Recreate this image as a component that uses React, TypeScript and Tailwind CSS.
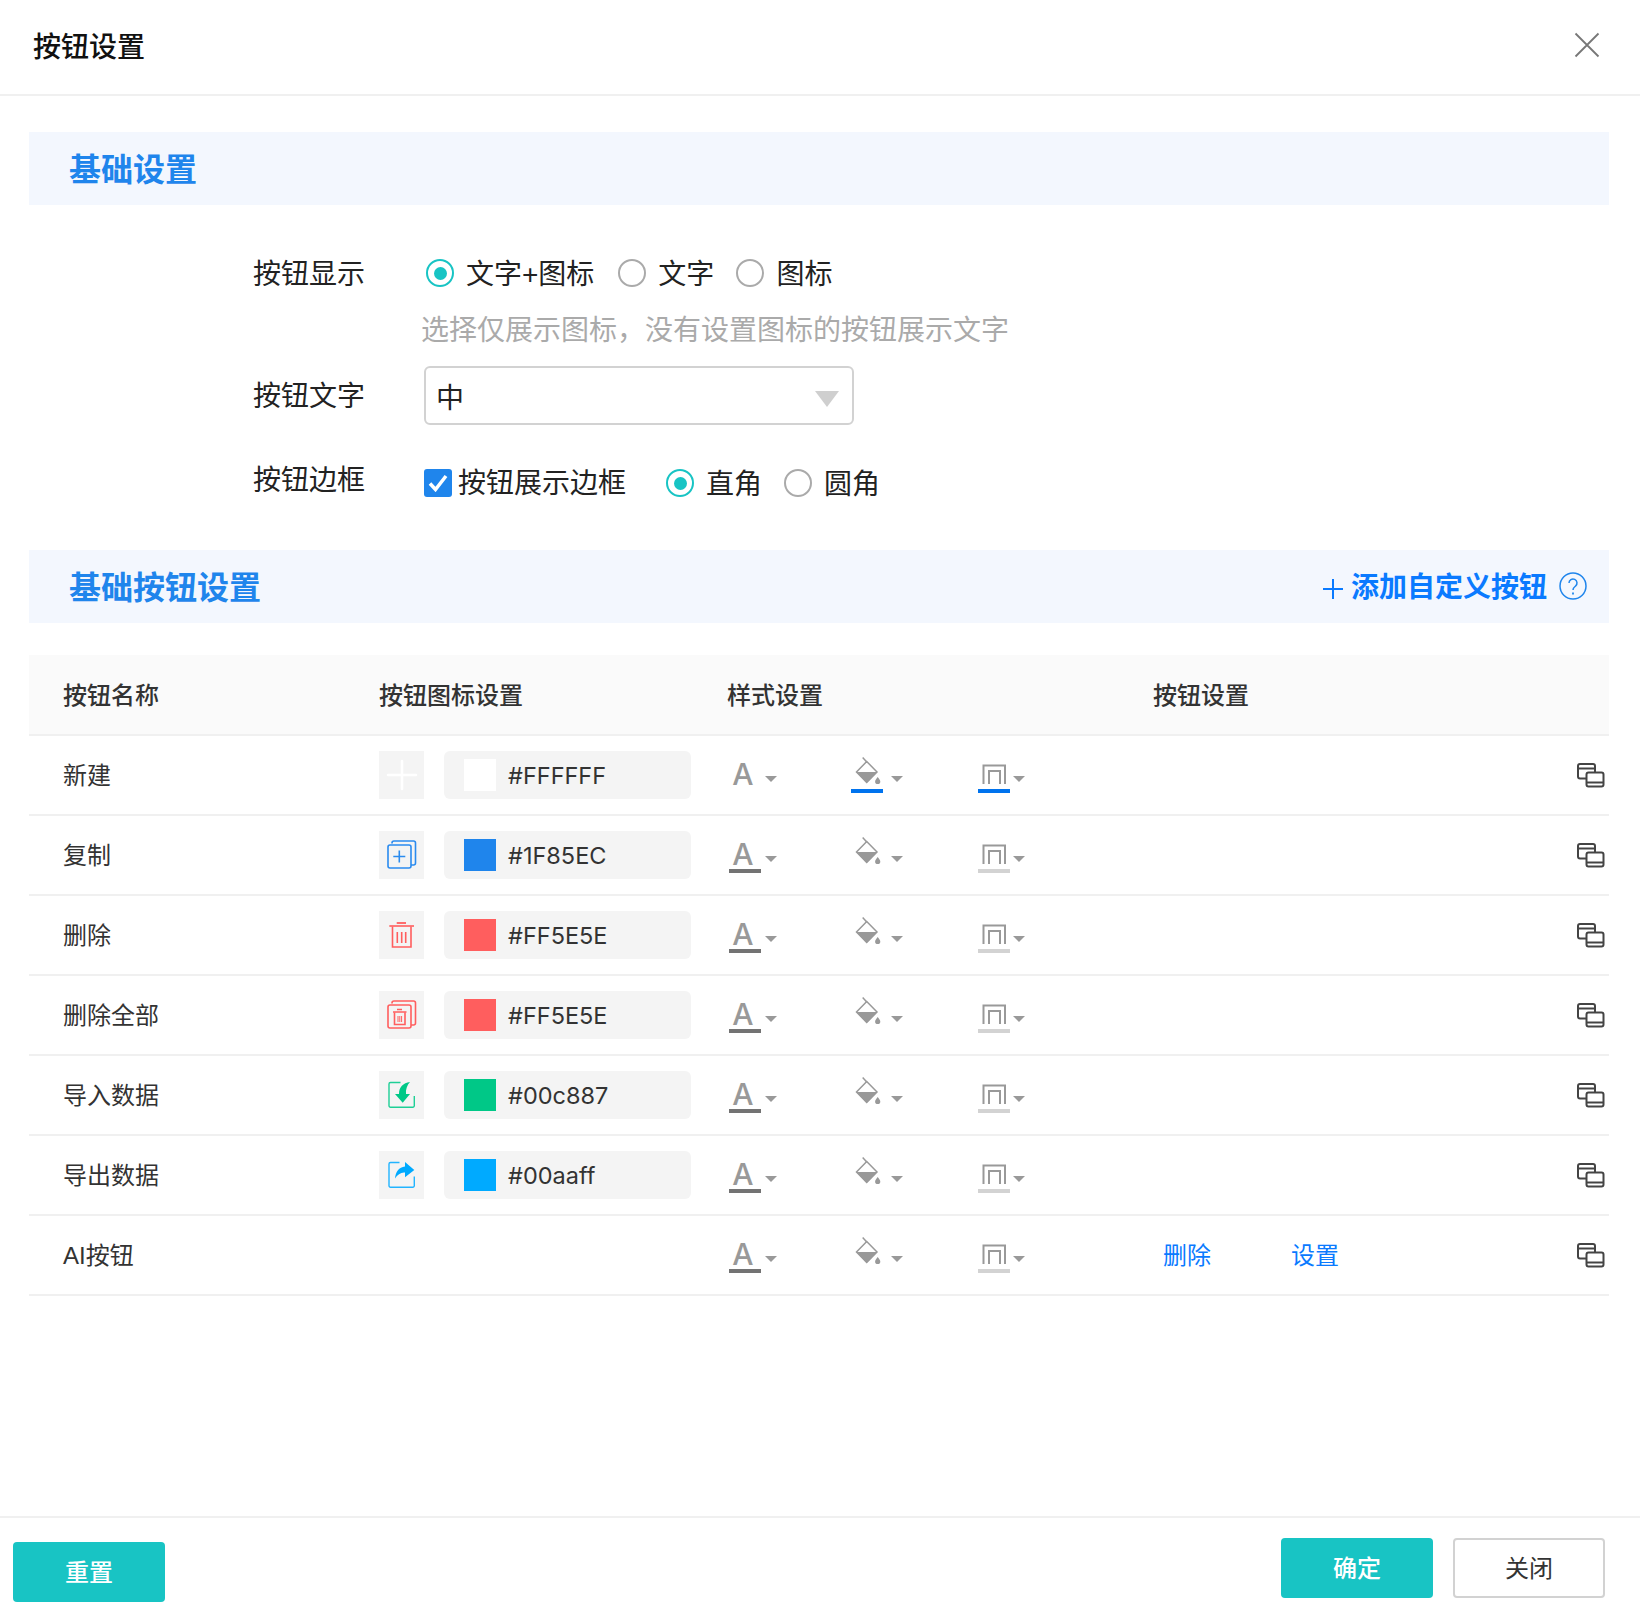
type RowData = {
  name: string;
  icon?: string;
  color?: string;
  swatch?: string;
};

const rows: RowData[] = [
  { name: "新建", icon: "plus", color: "#FFFFFF", swatch: "bg-[#ffffff]" },
  { name: "复制", icon: "copy", color: "#1F85EC", swatch: "bg-[#1f85ec]" },
  { name: "删除", icon: "trash", color: "#FF5E5E", swatch: "bg-[#ff5e5e]" },
  { name: "删除全部", icon: "trashAll", color: "#FF5E5E", swatch: "bg-[#ff5e5e]" },
  { name: "导入数据", icon: "import", color: "#00c887", swatch: "bg-[#00c887]" },
  { name: "导出数据", icon: "export", color: "#00aaff", swatch: "bg-[#00aaff]" },
  { name: "AI按钮" },
];

function ButtonIcon({ name }: { name?: string }) {
  if (name === "plus") {
    return (
      <svg width="45" height="48" fill="none" stroke="#fff" strokeWidth="2.5" strokeLinecap="round">
        <path d="M9 24H37M23 10V38" />
      </svg>
    );
  }
  if (name === "copy") {
    return (
      <svg width="45" height="48" fill="none" stroke="#2a8bef" strokeWidth="1.6">
        <path d="M13 12.5V12a2 2 0 0 1 2-2H34.500a2 2 0 0 1 2 2V32a2 2 0 0 1-2 2H32" />
        <rect x="9" y="14" width="23" height="23" rx="2" />
        <path d="M20.300 19.500V31.500M14.300 25.500H26.300" />
      </svg>
    );
  }
  if (name === "trash") {
    return (
      <svg width="45" height="48" fill="none" stroke="#ff5e5e" strokeWidth="1.6">
        <path d="M17.700 12H27" strokeWidth="1.800" />
        <path d="M10.300 15H35" />
        <path d="M13.500 15.500V36H32V15.500" />
        <path d="M18.300 21V32M22.700 21V32M26.700 21V32" />
      </svg>
    );
  }
  if (name === "trashAll") {
    return (
      <svg width="45" height="48" fill="none" stroke="#ff5e5e" strokeWidth="1.6">
        <path d="M13 12.500V12a2 2 0 0 1 2-2H34.500a2 2 0 0 1 2 2V32a2 2 0 0 1-2 2H32" />
        <rect x="9" y="14" width="23" height="23" rx="2" />
        <path d="M18 18.500H23M14 21H27.500" />
        <path d="M15.500 21.500V33.500H26V21.500" />
        <path d="M19 25V31M20.800 25V31M22.600 25V31" strokeWidth="1" />
      </svg>
    );
  }
  if (name === "import") {
    return (
      <svg width="45" height="48" fill="none">
        <path d="M21.500 11.500H11.500a1.500 1.500 0 0 0-1.500 1.500V34.800a1.500 1.500 0 0 0 1.500 1.500H33.800a1.500 1.500 0 0 0 1.500-1.500V25" stroke="#1fcf96" strokeWidth="1.400" />
        <path d="M31 11C24 12 20 16 20 23H16L23.700 31.700L31 23H27C26.500 19 28 14 31 11Z" fill="#00c887" />
      </svg>
    );
  }
  if (name === "export") {
    return (
      <svg width="45" height="48" fill="none">
        <path d="M20.500 11.500H11.500a1.500 1.500 0 0 0-1.500 1.500V34.800a1.500 1.500 0 0 0 1.500 1.500H33.800a1.500 1.500 0 0 0 1.500-1.500V25.500" stroke="#22b4ff" strokeWidth="1.400" />
        <path d="M26 11L35.300 19L26 26.300V21.500C22 21 18.500 23.500 16 27.500C16.500 21 20 16 26 15.500Z" fill="#00aaff" />
      </svg>
    );
  }
  return null;
}

function Caret({ className }: { className: string }) {
  return (
    <svg width="12" height="6" className={className} fill="#999">
      <path d="M0 0H12L6 6Z" />
    </svg>
  );
}

function StyleButtons({ first }: { first: boolean }) {
  return (
    <div className="flex items-start pl-[2px] h-full">
      {/* TEXT COLOR */}
      <div className="flex items-start w-[122px]">
        <div className="w-8 pt-[21px]">
          <div className="h-7 pr-1 flex items-end justify-center font-['Inter',sans-serif] font-medium text-[30px] leading-[22px] text-[#999]">
            A
          </div>
          <div className={first ? "h-1 mt-1" : "h-1 mt-1 bg-[#737373]"} />
        </div>
        <Caret className="ml-1 mt-10" />
      </div>

      {/* FILL */}
      <div className="flex items-start w-[127px]">
        <div className="w-8 pt-[21px]">
          <svg width="32" height="28" fill="none" className="block">
            <path d="M11.700 .5L15.700 5" stroke="#999" strokeWidth="1.500" />
            <path d="M15.700 4.500L26 15L15.700 25.500L5.500 15Z" stroke="#999" strokeWidth="1.500" />
            <path d="M5.500 15H26L15.700 26Z" fill="#999" />
            <path d="M26.700 20C28 22 29.300 23 29.300 24.500A2.600 2.600 0 0 1 24.100 24.500C24.100 23 25.400 22 26.700 20Z" fill="#999" />
          </svg>
          <div className={first ? "h-1 mt-1 bg-[#0073ee]" : "h-1 mt-1"} />
        </div>
        <Caret className="ml-2 mt-10" />
      </div>

      {/* BORDER */}
      <div className="flex items-start">
        <div className="w-8 pt-[21px]">
          <svg width="32" height="28" fill="none" stroke="#999" strokeWidth="2" className="block">
            <path d="M5.500 27V8.500H27V27" />
            <path d="M11 27V14H22V27" />
          </svg>
          <div className={first ? "h-1 mt-1 bg-[#0073ee]" : "h-1 mt-1 bg-[#d3d3d3]"} />
        </div>
        <Caret className="ml-[3px] mt-10" />
      </div>
    </div>
  );
}

function CopyIcon() {
  return (
    <svg width="28" height="25" fill="none" stroke="#444" strokeWidth="2">
      <path d="M9 15.500H3a2 2 0 0 1-2-2V3a2 2 0 0 1 2-2H16a2 2 0 0 1 2 2V9.500" />
      <path d="M1 5.500H18" />
      <rect x="9.500" y="9.500" width="17" height="14" rx="2" />
      <path d="M9.500 19.500H26.500" />
    </svg>
  );
}

function Radio({ checked, label }: { checked?: boolean; label: string }) {
  return (
    <div className="flex items-center gap-3">
      <div
        className={
          checked
            ? "w-7 h-7 rounded-full border-2 border-[#18c4c4] flex items-center justify-center"
            : "w-7 h-7 rounded-full border-2 border-[#aaaaaa]"
        }
      >
        {checked && <div className="w-[13px] h-[13px] rounded-full bg-[#18c4c4]" />}
      </div>
      <span className="leading-7 translate-y-0.5">{label}</span>
    </div>
  );
}

function SectionBar({ title, children }: { title: string; children?: React.ReactNode }) {
  return (
    <div className="ml-[29px] mr-[31px] h-[73px] pl-10 pr-[22px] bg-[#f3f7fe] flex items-center justify-between">
      <h2 className="text-[32px] font-semibold text-[#1f85ec] translate-y-px">{title}</h2>
      {children}
    </div>
  );
}

export default function App() {
  return (
    <div className="w-[1640px] h-[1620px] bg-white flex flex-col font-['Liberation_Sans','Noto_Sans_CJK_SC',sans-serif] text-[#222]">

      {/* HEADER */}
      <div className="h-24 shrink-0 pl-[33px] pr-10 border-b-2 border-[#f0f0f0] flex items-center justify-between">
        <h1 className="text-[28px] font-medium text-[#111] translate-y-px">按钮设置</h1>
        <svg width="26" height="26" fill="none" stroke="#777" strokeWidth="1.800" className="-mt-1">
          <path d="M1.500 1.500L24.500 24.500M24.500 1.500L1.500 24.500" />
        </svg>
      </div>

      <div className="mt-9">
        <SectionBar title="基础设置" />
      </div>

      {/* BASIC FORM */}
      <div className="pl-[253px] text-[28px]">
        <div className="flex items-center mt-[54px] h-7">
          <div className="w-[173px] leading-7 translate-y-0.5">按钮显示</div>
          <div className="flex items-center gap-[22px]">
            <div className="mr-0.5">
              <Radio checked label="文字+图标" />
            </div>
            <Radio label="文字" />
            <Radio label="图标" />
          </div>
        </div>

        <div className="pl-[168px] mt-7 leading-7 text-[#aaaaaa] translate-y-0.5">
          选择仅展示图标，没有设置图标的按钮展示文字
        </div>

        <div className="flex items-center mt-[23px]">
          <div className="w-[171px] leading-7 translate-y-px">按钮文字</div>
          <div className="w-[430px] h-[59px] pl-2.5 pr-[13px] rounded-md border-2 border-[#d2d2d2] flex items-center justify-between">
            <span className="leading-7 translate-y-[3px]">中</span>
            <svg width="24" height="16" fill="#cfcfcf" className="mt-[7px]">
              <path d="M0 0H24L12 16Z" />
            </svg>
          </div>
        </div>

        <div className="flex items-start mt-11 h-7">
          <div className="w-[171px] leading-7 -mt-0.5">按钮边框</div>
          <div className="flex items-center">
            <div className="w-7 h-7 rounded-[3px] bg-[#1f85ec] flex items-center justify-center">
              <svg width="20" height="18" fill="none" stroke="#fff" strokeWidth="3.500">
                <path d="M2 9.500L7.500 15.500L18 2" />
              </svg>
            </div>
            <span className="ml-1.5 leading-7 translate-y-px">按钮展示边框</span>
            <div className="flex items-center gap-[22px] ml-10">
              <Radio checked label="直角" />
              <Radio label="圆角" />
            </div>
          </div>
        </div>
      </div>

      <div className="mt-[53px]">
        <SectionBar title="基础按钮设置">
          <div className="flex items-center text-[#0a7aff] translate-y-px">
            <svg width="22" height="22" fill="none" stroke="#0a7aff" strokeWidth="2" className="mt-[2px]">
              <path d="M1 11H21M11 1V21" />
            </svg>
            <span className="ml-[7px] text-[28px] font-semibold">添加自定义按钮</span>
            <svg width="28" height="28" fill="none" stroke="#1f85ec" strokeWidth="1.500" className="ml-3 -mt-[3px]">
              <circle cx="14" cy="14" r="13" />
              <path d="M10 11a4 4 0 1 1 6.500 3.100C15 15.300 14 16 14 18" />
              <path d="M14 20.500V22.500" strokeWidth="1.800" />
            </svg>
          </div>
        </SectionBar>
      </div>

      {/* TABLE */}
      <div className="ml-[29px] mr-[31px] mt-8 text-2xl text-[#333]">
        <div className="h-[81px] pl-[34px] flex items-center bg-[#fafafa] border-b-2 border-[#f0f0f0] font-medium">
          <div className="w-[316px] translate-y-px">按钮名称</div>
          <div className="w-[348px] translate-y-px">按钮图标设置</div>
          <div className="w-[426px] translate-y-px">样式设置</div>
          <div className="translate-y-px">按钮设置</div>
        </div>

        {rows.map((row) => (
          <div key={row.name} className="h-20 pl-[34px] pr-1 flex items-center border-b-2 border-[#f0f0f0]">
            <div className="w-[316px] shrink-0 translate-y-px">{row.name}</div>
            <div className="w-[348px] shrink-0 flex items-center">
              {row.icon && (
                <>
                  <div className="w-[45px] h-12 bg-[#f4f4f4]">
                    <ButtonIcon name={row.icon} />
                  </div>
                  <div className="ml-5 w-[247px] h-12 pl-5 rounded-md bg-[#f4f4f4] flex items-center">
                    <div className={`w-8 h-8 ${row.swatch}`} />
                    <span className="ml-3 font-['Inter',sans-serif] text-[23.500px] translate-y-px">{row.color}</span>
                  </div>
                </>
              )}
            </div>
            <div className="w-[426px] shrink-0 h-full">
              <StyleButtons first={row.name === "新建"} />
            </div>
            <div className="flex-1 flex items-center pl-[10px] text-[#0a7aff] translate-y-px">
              {row.name === "AI按钮" && (
                <>
                  <a className="w-[128px]">删除</a>
                  <a>设置</a>
                </>
              )}
            </div>
            <CopyIcon />
          </div>
        ))}
      </div>

      <div className="flex-1" />

      {/* FOOTER */}
      <div className="h-[104px] shrink-0 pl-[13px] pr-[35px] border-t-2 border-[#f0f0f0] flex items-start justify-between text-2xl">
        <button className="mt-6 w-[152px] h-[60px] pt-[2px] rounded bg-[#18c4c4] text-white font-medium">重置</button>
        <div className="mt-5 flex gap-5">
          <button className="w-[152px] h-[60px] pt-[2px] rounded bg-[#18c4c4] text-white font-medium">确定</button>
          <button className="w-[152px] h-[60px] pt-[2px] rounded border-2 border-[#d2d2d2] text-[#333]">关闭</button>
        </div>
      </div>
    </div>
  );
}
